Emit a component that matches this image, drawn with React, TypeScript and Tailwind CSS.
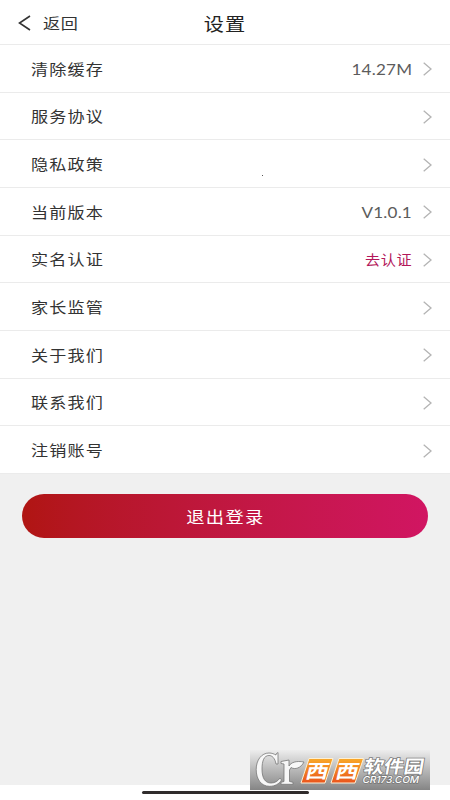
import React from "react";

const ChevronRight: React.FC = () => (
  <svg
    className="w-[9px] h-[14px] relative top-px"
    viewBox="0 0 9 14"
    fill="none"
  >
    <path d="M0.7 0.8L8 7L0.7 13.2" stroke="#b4b4b4" strokeWidth="1.3" />
  </svg>
);

const SettingRow: React.FC<{
  label: string;
  value?: string;
  highlight?: boolean;
}> = ({ label, value, highlight }) => (
  <div className="flex items-center justify-between h-[47.67px] pl-[30.5px] pr-[18px] border-b border-[#ebebeb] bg-white">
    <p className="text-[15px] tracking-[1px] origin-left scale-x-[1.14] text-[#333333]">
      {label}
    </p>
    <div className="flex items-center gap-[11px]">
      {value && (
        <p
          className={
            highlight
              ? "text-[13.5px] tracking-[0.6px] origin-right scale-x-[1.12] pt-px text-[#b3175a]"
              : "font-['Lato'] text-[15.5px] tracking-[0.2px] origin-right scale-x-[1.1] pt-[2px] text-[#5c5c5c]"
          }
        >
          {value}
        </p>
      )}
      <ChevronRight />
    </div>
  </div>
);

const SiteBadge: React.FC = () => (
  <svg
    className="absolute left-[250px] top-[750px] w-[180px] h-[40px]"
    viewBox="0 0 180 40"
  >
    <defs>
      <linearGradient id="badgeBg" x1="0" y1="0" x2="0" y2="1">
        <stop offset="0" stopColor="#ededed" />
        <stop offset="0.45" stopColor="#bdbdbd" />
        <stop offset="1" stopColor="#858585" />
      </linearGradient>
      <linearGradient id="badgeOrange" x1="0" y1="0" x2="0" y2="1">
        <stop offset="0" stopColor="#f9a928" />
        <stop offset="1" stopColor="#e9541c" />
      </linearGradient>
    </defs>
    <rect width="180" height="40" fill="url(#badgeBg)" />
    <g
      fill="#f7f7f7"
      stroke="#777777"
      strokeWidth="0.8"
      strokeLinejoin="round"
    >
      <path d="M26 4L28 2.5V14H26C25 8 22 5.5 19 5.5C14 5.5 12 11 12 19C12 28 15 33 21 33C25 33 28 31 30 28L31.5 30C29 34 25 36.3 19.5 36.3C11 36.3 6.2 29 6.2 19.5C6.2 10 11.5 3 19 3C22 3 24 4 26 5Z" />
      <path d="M31 11.5L39 10V16C41 12.5 46 10.5 54 12C51 18 45 20 41 17.5L39.5 20V31.5L43 32.3V34.3H31V32.3L34 31.5V14L31 13.5Z" />
    </g>
    <g stroke="#fdf0d4" strokeWidth="1" fill="url(#badgeOrange)">
      <path d="M59 8.5H83L75 33H51Z" />
      <path d="M89 8.5H113.5L105 33H81Z" />
    </g>
    <g fill="#ffffff" fontWeight="700" fontSize="19">
      <text transform="translate(54.5 28) skewX(-14) scale(1.2 1)">西</text>
      <text transform="translate(84.5 28) skewX(-14) scale(1.2 1)">西</text>
    </g>
    <g
      fill="#ffffff"
      stroke="#777777"
      strokeWidth="1.4"
      paintOrder="stroke"
      fontWeight="700"
    >
      <text
        transform="translate(113 22.8) skewX(-10)"
        fontSize="18"
        textLength="60"
        lengthAdjust="spacingAndGlyphs"
      >
        软件园
      </text>
      <text
        transform="translate(112 33.2) skewX(-12)"
        fontSize="9.6"
        fontFamily="Inter"
        fontWeight="500"
        textLength="56.5"
        lengthAdjust="spacingAndGlyphs"
      >
        CR173.COM
      </text>
    </g>
  </svg>
);

const App: React.FC = () => {
  const rows = [
    { label: "清除缓存", value: "14.27M" },
    { label: "服务协议" },
    { label: "隐私政策" },
    { label: "当前版本", value: "V1.0.1" },
    { label: "实名认证", value: "去认证", highlight: true },
    { label: "家长监管" },
    { label: "关于我们" },
    { label: "联系我们" },
    { label: "注销账号" },
  ];

  return (
    <div className="relative flex flex-col w-[450px] h-[800px] overflow-hidden bg-[#f0f0f0] leading-none font-['Noto_Sans_CJK_SC',sans-serif]">
      <div className="grid grid-cols-3 items-center h-[45px] shrink-0 px-[18px] pt-px border-b border-[#ebebeb] bg-white">
        <div className="flex items-center gap-3">
          <svg className="w-[13px] h-[16px]" viewBox="0 0 13 16" fill="none">
            <path d="M12 1L1.5 8L12 15" stroke="#333333" strokeWidth="1.6" />
          </svg>
          <p className="text-[15px] tracking-[0.6px] origin-left scale-x-[1.14] text-[#333333]">
            返回
          </p>
        </div>
        <h1 className="text-center text-[18px] tracking-[1px] scale-x-[1.12] text-[#222222]">
          设置
        </h1>
      </div>

      <div className="flex flex-col">
        {rows.map((row) => (
          <SettingRow
            key={row.label}
            label={row.label}
            value={row.value}
            highlight={row.highlight}
          />
        ))}
      </div>

      <div className="px-[22px] pt-[20px] flex-1">
        <button className="flex items-center justify-center w-full h-[44px] rounded-full bg-linear-to-r from-[#b01512] to-[#d11562] text-white">
          <span className="text-[16px] tracking-[1.2px] scale-x-[1.14]">
            退出登录
          </span>
        </button>
      </div>

      <div className="flex justify-center h-[15px] shrink-0 pt-[6px] bg-white">
        <div className="w-[167px] h-[3px] rounded-full bg-[#302c2c]" />
      </div>

      <div className="absolute left-[262px] top-[175px] size-px bg-[#555555]" />
      <SiteBadge />
    </div>
  );
};

export default App;
